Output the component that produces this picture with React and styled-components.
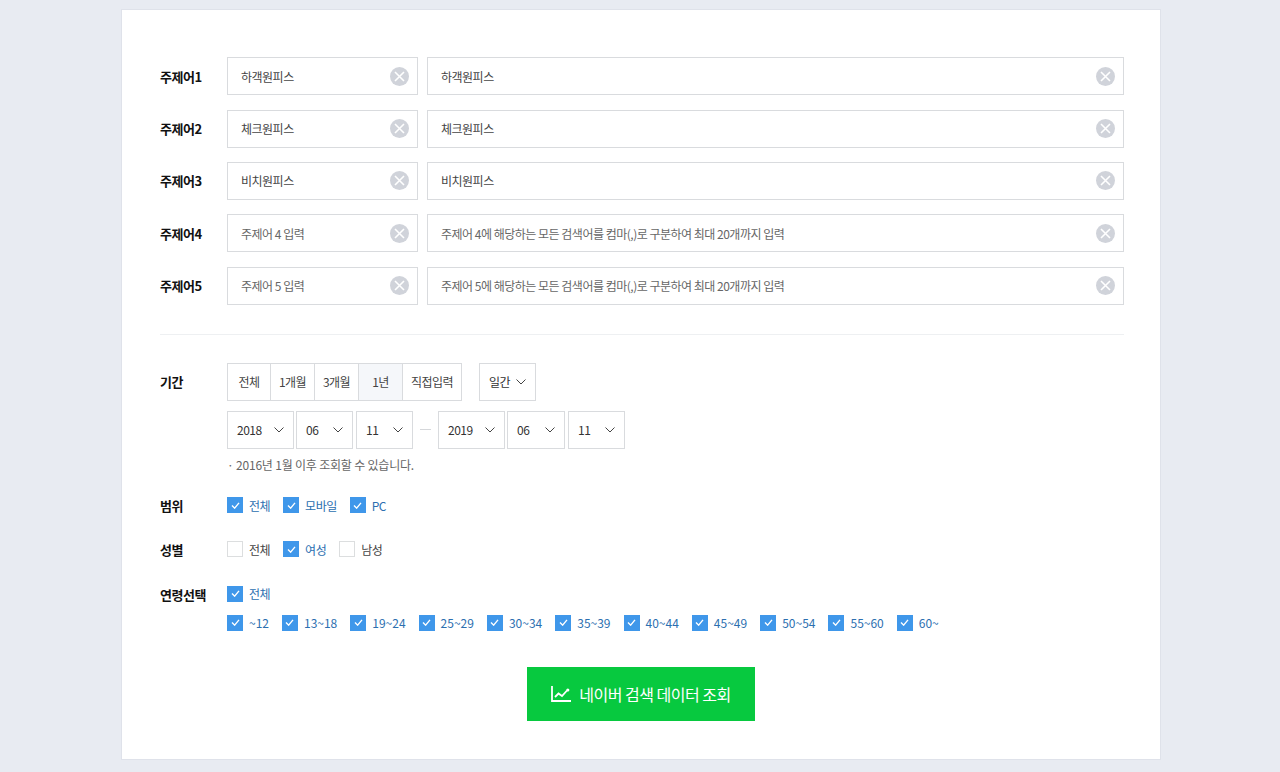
import React from 'react'
import styled, { createGlobalStyle } from 'styled-components'

const GlobalStyle = createGlobalStyle`
  html, body {
    margin: 0;
    padding: 0;
    background: #e8ebf2;
  }
  * {
    box-sizing: border-box;
  }
  body {
    font-family: "Noto Sans CJK KR", "Noto Sans", sans-serif;
    letter-spacing: -0.5px;
  }
`

const Page = styled.div`
  height: 772px;
  padding-top: 9px;
  overflow: hidden;
`

const Card = styled.div`
  width: 1040px;
  height: 751px;
  margin-left: 121px;
  padding: 47.4px 36px 0 38px;
  background: #fff;
  border: 1px solid #dfe2ea;
`

const KeywordList = styled.div`
  display: flex;
  flex-direction: column;
  gap: 14.3px;
`

const KeywordRow = styled.div`
  display: flex;
  align-items: center;
`

const KeywordFields = styled.div`
  display: flex;
  gap: 9px;
`

const Label = styled.div`
  flex: none;
  width: 67px;
  font-size: 13px;
  font-weight: 700;
  color: #111;
`

const InputBox = styled.div`
  display: flex;
  align-items: center;
  width: ${p => p.$width}px;
  height: 38px;
  padding: 0 8px 0 13px;
  border: 1px solid #d9dbde;
`

const KeywordInput = styled.input`
  flex: 1;
  min-width: 0;
  border: 0;
  outline: 0;
  padding: 0;
  font-family: inherit;
  font-size: 12px;
  letter-spacing: -0.5px;
  color: #444;
  &::placeholder {
    color: #666;
    opacity: 1;
  }
`

const ClearButton = styled.svg`
  flex: none;
  width: 19px;
  height: 19px;
`

const Divider = styled.div`
  height: 1px;
  margin: 29px 0 28px;
  background: #eef0f2;
`

const PeriodRow = styled.div`
  display: flex;
  align-items: flex-start;
`

const PeriodLabel = styled(Label)`
  line-height: 38px;
`

const PeriodBody = styled.div`
  display: flex;
  flex-direction: column;
`

const ControlRow = styled.div`
  display: flex;
  align-items: center;
  margin-top: ${p => p.$top || 0}px;
`

const Segments = styled.div`
  display: flex;
  height: 38px;
  margin-right: 17px;
  border: 1px solid #d9dbde;
`

const Segment = styled.div`
  display: flex;
  align-items: center;
  justify-content: center;
  width: ${p => p.$width}px;
  font-size: 12px;
  color: #444;
  background: ${p => (p.$active ? '#f5f7fa' : '#fff')};
  border-left: ${p => (p.$first ? '0' : '1px solid #d9dbde')};
`

const SelectBox = styled.div`
  display: flex;
  align-items: center;
  justify-content: space-between;
  flex: none;
  width: ${p => p.$width}px;
  height: 38px;
  margin-right: ${p => p.$after || 0}px;
  padding: 0 9px;
  font-size: 12px;
  color: #333;
  border: 1px solid #d9dbde;
`

const Chevron = styled.svg`
  flex: none;
  width: 10px;
  height: 6px;
`

const Dash = styled.div`
  flex: none;
  width: 11px;
  height: 1px;
  margin: 0 7px;
  background: #d5d7da;
`

const Note = styled.p`
  margin: 7px 0 0;
  font-size: 12px;
  line-height: 18px;
  letter-spacing: -0.2px;
  color: #666;
`

const OptionRow = styled.div`
  display: flex;
  align-items: ${p => (p.$stacked ? 'flex-start' : 'center')};
  margin-top: ${p => p.$top}px;
`

const OptionStack = styled.div`
  display: flex;
  flex-direction: column;
  gap: 13px;
`

const OptionGroup = styled.div`
  display: flex;
  align-items: center;
  gap: 13px;
  letter-spacing: ${p => (p.$numeric ? '0' : 'inherit')};
`

const Option = styled.div`
  display: flex;
  align-items: center;
  gap: 6px;
  height: 16px;
  font-size: 12px;
  color: ${p => (p.$checked ? '#2c6fb0' : '#444')};
`

const Box = styled.span`
  display: flex;
  align-items: center;
  justify-content: center;
  flex: none;
  width: 16px;
  height: 16px;
  background: ${p => (p.$checked ? '#3f97ea' : '#fff')};
  border: 1px solid ${p => (p.$checked ? '#3f97ea' : '#dcdedf')};
`

const Tick = styled.svg`
  width: 9px;
  height: 7px;
`

const StackLabel = styled(Label)`
  line-height: 18px;
`

const SubmitRow = styled.div`
  display: flex;
  justify-content: center;
  margin-top: 36px;
`

const SubmitButton = styled.button`
  display: flex;
  align-items: center;
  justify-content: center;
  gap: 8px;
  width: 228px;
  height: 54px;
  margin-right: 2px;
  padding: 0;
  border: 0;
  font-family: inherit;
  font-size: 16px;
  letter-spacing: -0.5px;
  color: #fff;
  background: #07c93f;
`

const keywords = [
  { label: '주제어1', name: '하객원피스', terms: '하객원피스' },
  { label: '주제어2', name: '체크원피스', terms: '체크원피스' },
  { label: '주제어3', name: '비치원피스', terms: '비치원피스' },
  { label: '주제어4', hint: '주제어 4 입력', termsHint: '주제어 4에 해당하는 모든 검색어를 컴마(,)로 구분하여 최대 20개까지 입력' },
  { label: '주제어5', hint: '주제어 5 입력', termsHint: '주제어 5에 해당하는 모든 검색어를 컴마(,)로 구분하여 최대 20개까지 입력' },
]

const ages = ['~12', '13~18', '19~24', '25~29', '30~34', '35~39', '40~44', '45~49', '50~54', '55~60', '60~']

function Clear() {
  return (
    <ClearButton viewBox="0 0 19 19">
      <circle cx="9.5" cy="9.5" r="9.5" fill="#d0d3da" />
      <path d="M5 5l9 9M14 5l-9 9" stroke="#fff" strokeWidth="1.6" fill="none" />
    </ClearButton>
  )
}

function Select({ value, width, after }) {
  return (
    <SelectBox $width={width} $after={after}>
      <span>{value}</span>
      <Chevron viewBox="0 0 10 6">
        <path d="M.5.5L5 5 9.5.5" stroke="#444" strokeWidth="1" fill="none" />
      </Chevron>
    </SelectBox>
  )
}

function Check({ checked, children }) {
  return (
    <Option $checked={checked}>
      <Box $checked={checked}>
        {checked && (
          <Tick viewBox="0 0 10 8">
            <path d="M1 4l3 3 5-6" stroke="#fff" strokeWidth="1.6" fill="none" />
          </Tick>
        )}
      </Box>
      {children}
    </Option>
  )
}

export default function App() {
  return (
    <>
      <GlobalStyle />
      <Page>
        <Card>
          <KeywordList>
            {keywords.map(k => (
              <KeywordRow key={k.label}>
                <Label>{k.label}</Label>
                <KeywordFields>
                  <InputBox $width={191}>
                    <KeywordInput readOnly defaultValue={k.name} placeholder={k.hint} />
                    <Clear />
                  </InputBox>
                  <InputBox $width={697}>
                    <KeywordInput readOnly defaultValue={k.terms} placeholder={k.termsHint} />
                    <Clear />
                  </InputBox>
                </KeywordFields>
              </KeywordRow>
            ))}
          </KeywordList>

          <Divider />

          <PeriodRow>
            <PeriodLabel>기간</PeriodLabel>
            <PeriodBody>
              <ControlRow>
                <Segments>
                  <Segment $first $width={42}>전체</Segment>
                  <Segment $width={44}>1개월</Segment>
                  <Segment $width={44}>3개월</Segment>
                  <Segment $active $width={44}>1년</Segment>
                  <Segment $width={59}>직접입력</Segment>
                </Segments>
                <Select value="일간" width={57} />
              </ControlRow>
              <ControlRow $top={10}>
                <Select value="2018" width={67} after={2} />
                <Select value="06" width={57} after={3} />
                <Select value="11" width={57} />
                <Dash />
                <Select value="2019" width={67} after={2} />
                <Select value="06" width={58} after={3} />
                <Select value="11" width={57} />
              </ControlRow>
              <Note>· 2016년 1월 이후 조회할 수 있습니다.</Note>
            </PeriodBody>
          </PeriodRow>

          <OptionRow $top={22}>
            <Label>범위</Label>
            <OptionGroup>
              <Check checked>전체</Check>
              <Check checked>모바일</Check>
              <Check checked>PC</Check>
            </OptionGroup>
          </OptionRow>

          <OptionRow $top={25}>
            <Label>성별</Label>
            <OptionGroup>
              <Check>전체</Check>
              <Check checked>여성</Check>
              <Check>남성</Check>
            </OptionGroup>
          </OptionRow>

          <OptionRow $top={27} $stacked>
            <StackLabel>연령선택</StackLabel>
            <OptionStack>
              <Check checked>전체</Check>
              <OptionGroup $numeric>
                {ages.map(age => (
                  <Check checked key={age}>{age}</Check>
                ))}
              </OptionGroup>
            </OptionStack>
          </OptionRow>

          <SubmitRow>
            <SubmitButton>
              <svg width="20" height="16" viewBox="0 0 20 16" fill="none" stroke="#fff">
                <path d="M1 0v15h19" strokeWidth="1.8" />
                <path d="M4 11l3.5-3.5 3.5 2.5 5-5.5" strokeWidth="1.8" />
                <circle cx="16.8" cy="4" r="1.6" fill="#fff" stroke="none" />
              </svg>
              네이버 검색 데이터 조회
            </SubmitButton>
          </SubmitRow>
        </Card>
      </Page>
    </>
  )
}
